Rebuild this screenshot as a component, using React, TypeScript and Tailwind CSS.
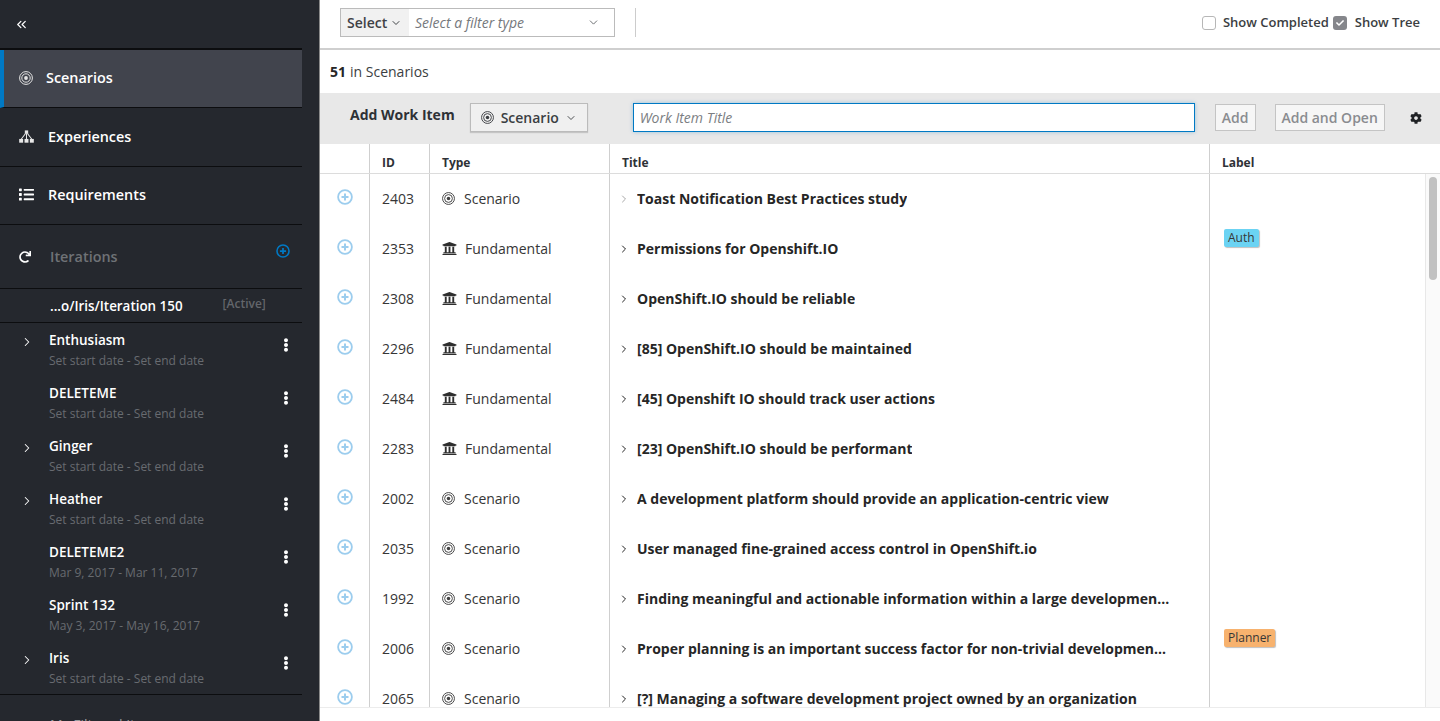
import React from "react";
import { FaList, FaRedo, FaUniversity, FaCog, FaEllipsisV, FaCheck } from "react-icons/fa";
import { ChevronsLeft, ChevronRight, ChevronDown } from "lucide-react";

const Target = ({ className = "" }: { className?: string }) => (
  <svg viewBox="0 0 14 14" className={className} fill="none" stroke="currentColor">
    <circle cx="7" cy="7" r="6.4" strokeWidth="1" />
    <circle cx="7" cy="7" r="4.2" strokeWidth="1" />
    <circle cx="7" cy="7" r="1.9" fill="currentColor" stroke="none" />
  </svg>
);

const Topology = ({ className = "" }: { className?: string }) => (
  <svg viewBox="0 0 16 14" className={className} fill="currentColor">
    <path d="M6.2 0.5 H9.8 V4.2 H6.2 Z" />
    <rect x="0.2" y="9.6" width="4.2" height="4" />
    <rect x="5.9" y="9.6" width="4.2" height="4" />
    <rect x="11.6" y="9.6" width="4.2" height="4" />
    <path d="M6.8 4 L2.3 10 M9.2 4 L13.7 10 M8 4 V10" stroke="currentColor" strokeWidth="1.1" fill="none" />
  </svg>
);

const PlusCircle = ({ className = "" }: { className?: string }) => (
  <svg viewBox="0 0 16 16" className={className} fill="none" stroke="currentColor">
    <circle cx="8" cy="8" r="6.9" strokeWidth="1.8" />
    <path d="M8 4.5 V11.5 M4.5 8 H11.5" strokeWidth="2" />
  </svg>
);

type NavProps = { icon: React.ReactNode; label: string; h: string; gap: string; pb: string; active?: boolean };
const NavItem = ({ icon, label, h, gap, pb, active }: NavProps) => (
  <div className={`${h} ${gap} ${pb} flex items-center border-b border-[#0c0d0f] text-[14.4px] font-semibold text-white ${active ? "bg-[#41444d] border-l-4 border-l-[#0079c4] pl-[15px]" : "pl-[19px]"}`}>
    {icon}
    <span>{label}</span>
  </div>
);

const iterations = [
  { name: "Enthusiasm", date: "Set start date - Set end date", arrow: true },
  { name: "DELETEME", date: "Set start date - Set end date", arrow: false },
  { name: "Ginger", date: "Set start date - Set end date", arrow: true },
  { name: "Heather", date: "Set start date - Set end date", arrow: true },
  { name: "DELETEME2", date: "Mar 9, 2017 - Mar 11, 2017", arrow: false },
  { name: "Sprint 132", date: "May 3, 2017 - May 16, 2017", arrow: false },
  { name: "Iris", date: "Set start date - Set end date", arrow: true },
];

const rows = [
  { id: "2403", type: "Scenario", title: "Toast Notification Best Practices study", faded: true },
  { id: "2353", type: "Fundamental", title: "Permissions for Openshift.IO", label: "Auth" },
  { id: "2308", type: "Fundamental", title: "OpenShift.IO should be reliable" },
  { id: "2296", type: "Fundamental", title: "[85] OpenShift.IO should be maintained" },
  { id: "2484", type: "Fundamental", title: "[45] Openshift IO should track user actions" },
  { id: "2283", type: "Fundamental", title: "[23] OpenShift.IO should be performant" },
  { id: "2002", type: "Scenario", title: "A development platform should provide an application-centric view" },
  { id: "2035", type: "Scenario", title: "User managed fine-grained access control in OpenShift.io" },
  { id: "1992", type: "Scenario", title: "Finding meaningful and actionable information within a large developmen..." },
  { id: "2006", type: "Scenario", title: "Proper planning is an important success factor for non-trivial developmen...", label: "Planner" },
  { id: "2065", type: "Scenario", title: "[?] Managing a software development project owned by an organization" },
];

export default function App() {
  return (
    <div className="flex h-[721px] w-[1440px] overflow-hidden bg-white font-['Open_Sans',sans-serif] text-[#262626]">
      <aside className="flex h-full w-[320px] shrink-0 flex-col overflow-hidden border-r border-[#8a8a8a] bg-[#25282e]">
        <div className="w-[302px]">
          <div className="flex h-[50px] items-center border-b-2 border-[#0c0d0f] pl-[14px] text-white">
            <ChevronsLeft className="h-[15px] w-[15px]" strokeWidth={2} />
          </div>
          <NavItem active h="h-[58px]" gap="gap-[13px]" pb="pb-[2px]" label="Scenarios" icon={<Target className="h-[14px] w-[14px] text-[#e4e4e4]" />} />
          <NavItem h="h-[59px]" gap="gap-[14px]" pb="pb-[1px]" label="Experiences" icon={<Topology className="h-[15px] w-[15px] text-[#e8e8e8]" />} />
          <NavItem h="h-[58px]" gap="gap-[14px]" pb="pb-[2px]" label="Requirements" icon={<FaList className="h-[15px] w-[15px] text-white" />} />
          <div className="flex h-[64px] items-center border-b border-[#0c0d0f] pl-[19px] text-[14.4px] font-semibold">
            <FaRedo className="h-[12px] w-[12px] text-white" />
            <span className="ml-[19px] text-[#6f7276]">Iterations</span>
            <PlusCircle className="mb-[11px] ml-auto mr-[12px] h-[14px] w-[14px] text-[#0079c4]" />
          </div>
          <div className="flex h-[34px] items-center border-b border-[#0c0d0f] pl-[50px] pt-[1px] text-white">
            <span className="text-[13.4px] font-semibold">...o/Iris/Iteration 150</span>
            <span className="mb-[4px] ml-[40px] text-[12px] font-semibold text-[#63666b]">[Active]</span>
          </div>
          <div className="border-b border-[#0c0d0f]">
            {iterations.map((it) => (
              <div key={it.name} className="relative flex h-[53px] flex-col pl-[49px] pt-[6px]">
                {it.arrow && <ChevronRight className="absolute left-[20px] top-[12px] h-[14px] w-[14px] text-white" strokeWidth={1.8} />}
                <span className="text-[13.5px] font-semibold leading-[22px] text-white">{it.name}</span>
                <span className="text-[12px] leading-[20px] text-[#686b70]">{it.date}</span>
                <FaEllipsisV className="absolute left-[280px] top-[15px] h-[14px] w-[12px] text-white" />
              </div>
            ))}
          </div>
        </div>
        <div className="mt-[22px] pl-[50px] text-[14px] leading-[16px] text-[#9a9ca0]">My Filtered Items</div>
      </aside>

      <main className="flex min-w-0 flex-1 flex-col">
        <div className="flex h-[50px] shrink-0 items-center border-b-2 border-[#cfcfcf] pb-[4px] pl-[20px] pr-[20px]">
          <div className="flex h-[29px] w-[275px] border border-[#bbbbbb] text-[14px]">
            <div className="flex w-[68px] items-center bg-[#f1f1f1] pl-[6px] font-semibold text-[#3f4246]">
              Select
              <ChevronDown className="ml-[3px] mt-[2px] h-[12px] w-[12px]" strokeWidth={2} />
            </div>
            <div className="flex flex-1 items-center justify-between pl-[6px] pr-[14px] italic text-[#75787c]">
              Select a filter type
              <ChevronDown className="mt-[1px] h-[13px] w-[13px] text-[#6a6d70]" strokeWidth={1.8} />
            </div>
          </div>
          <div className="ml-[20px] h-[29px] w-px bg-[#cccccc]" />
          <div className="ml-auto mt-[2px] flex items-center text-[13px] font-semibold text-[#3b3e42]">
            <span className="h-[14px] w-[14px] rounded-[3px] border border-[#b7b7b7] bg-white" />
            <span className="ml-[7px]">Show Completed</span>
            <span className="ml-[4px] flex h-[14px] w-[14px] items-center justify-center rounded-[3px] bg-[#85868b]">
              <FaCheck className="h-[8px] w-[8px] text-white" />
            </span>
            <span className="ml-[8px]">Show Tree</span>
          </div>
        </div>

        <div className="flex h-[43px] shrink-0 items-center pl-[10px] text-[14px]">
          <span className="font-bold">51</span>
          <span className="ml-[4px] text-[#3b3e42]">in Scenarios</span>
        </div>

        <div className="flex h-[51px] shrink-0 items-center bg-[#e8e8e8] pb-[2px] pl-[30px]">
          <span className="mb-[7px] text-[14px] font-bold text-[#2e3136]">Add Work Item</span>
          <div className="ml-[15px] flex h-[29px] w-[118px] items-center border border-[#bbbbbb] bg-[#f0f0f0] pl-[10px] text-[14px] font-semibold text-[#3b3e42] shadow-[0_1px_1px_rgba(0,0,0,0.15)]">
            <Target className="h-[13px] w-[13px]" />
            <span className="ml-[7px]">Scenario</span>
            <ChevronDown className="ml-[6px] h-[12px] w-[12px]" strokeWidth={1.8} />
          </div>
          <div className="ml-[45px] flex h-[29px] w-[562px] items-center border border-[#0079c4] bg-white pl-[6px] text-[14px] italic text-[#7b7e82] shadow-[0_0_4px_rgba(0,121,196,0.35)]">
            Work Item Title
          </div>
          <div className="ml-[20px] flex h-[27px] w-[41px] items-center justify-center border border-[#c4c4c4] bg-[#f6f6f6] text-[14px] font-semibold text-[#8a8c90]">Add</div>
          <div className="ml-[19px] flex h-[27px] w-[110px] items-center justify-center border border-[#c4c4c4] bg-[#f6f6f6] text-[14px] font-semibold text-[#8a8c90]">Add and Open</div>
          <FaCog className="ml-[25px] h-[12px] w-[12px] text-[#1f2124]" />
        </div>

        <div className="flex h-[30px] shrink-0 border-b border-[#dcdcdc] text-[12px] font-bold text-[#2e3136]">
          <div className="w-[50px] border-r border-[#cfcfcf]" />
          <div className="flex w-[60px] items-center border-r border-[#cfcfcf] pl-[12px] pt-[8px]">ID</div>
          <div className="flex w-[180px] items-center border-r border-[#cfcfcf] pl-[12px] pt-[8px]">Type</div>
          <div className="flex w-[600px] items-center border-r border-[#cfcfcf] pl-[12px] pt-[8px]">Title</div>
          <div className="flex flex-1 items-center pl-[12px] pt-[8px]">Label</div>
        </div>

        <div className="flex h-[534px] shrink-0 overflow-hidden border-b border-[#ececec]">
          <div className="min-w-0 flex-1 overflow-hidden">
            {rows.map((r) => (
              <div key={r.id} className="flex h-[50px] text-[14px] text-[#363636]">
                <div className="flex w-[50px] items-center border-r border-[#cfcfcf] pb-[5px] pl-[17px]">
                  <PlusCircle className="h-[16px] w-[16px] text-[#9ccdee]" />
                </div>
                <div className="flex w-[60px] items-center border-r border-[#cfcfcf] pb-[2px] pl-[12px]">{r.id}</div>
                <div className="flex w-[180px] items-center border-r border-[#cfcfcf] pb-[2px] pl-[12px]">
                  {r.type === "Scenario" ? (
                    <Target className="h-[13px] w-[13px] text-[#3f3f3f]" />
                  ) : (
                    <FaUniversity className="h-[15px] w-[15px] text-[#2e2e2e]" />
                  )}
                  <span className={r.type === "Scenario" ? "ml-[9px]" : "ml-[8px]"}>{r.type}</span>
                </div>
                <div className="flex w-[600px] items-center border-r border-[#cfcfcf] pb-[2px] pl-[8px]">
                  <ChevronRight className={`mt-[2px] h-[12px] w-[12px] ${r.faded ? "text-[#a8a8a8]" : "text-[#222222]"}`} strokeWidth={2} />
                  <span className="ml-[7px] truncate font-bold text-[#262626]">{r.title}</span>
                </div>
                <div className="relative flex-1">
                  {r.label && (
                    <span className={`absolute left-[14px] top-[5px] flex h-[18px] items-center rounded-[2px] px-[4px] text-[12px] text-[#363636] shadow-[1px_1px_1px_rgba(0,0,0,0.25)] ${r.label === "Auth" ? "bg-[#6bd3f3]" : "bg-[#f7b26e]"}`}>
                      {r.label}
                    </span>
                  )}
                </div>
              </div>
            ))}
          </div>
          <div className="flex w-[15px] shrink-0 justify-center border-l border-[#e8e8e8] bg-[#fafafa] pt-[3px]">
            <div className="h-[103px] w-[8px] rounded-[4px] bg-[#c1c1c1]" />
          </div>
        </div>
      </main>
    </div>
  );
}
